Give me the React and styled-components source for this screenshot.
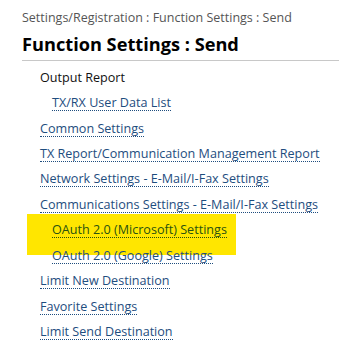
import React from 'react';
import styled, { createGlobalStyle } from 'styled-components';

const GlobalStyle = createGlobalStyle`
  body {
    margin: 0;
    background: #fff;
    font-family: "Open Sans", "Liberation Sans", sans-serif;
  }
`;

const Page = styled.div`
  width: 339px;
  height: 347px;
  overflow: hidden;
  padding: 8px 0 0 22px;
  box-sizing: border-box;
`;

const Breadcrumb = styled.div`
  font-size: 12.5px;
  line-height: 20px;
  color: #555;
`;

const Title = styled.h1`
  margin: 4px 0 0;
  font-size: 18.2px;
  font-weight: bold;
  line-height: 25px;
  color: #000;
  padding-bottom: 3px;
  border-bottom: 1px solid #c8c8c8;
`;

const List = styled.div`
  display: flex;
  flex-direction: column;
  padding-top: 4px;
`;

const Row = styled.div`
  position: relative;
  height: 25.45px;
  display: flex;
  align-items: center;
  padding-left: ${({ $indent }) => ($indent ? 30 : 18)}px;

  ${({ $mark }) =>
    $mark
      ? `&::before {
          content: '';
          position: absolute;
          left: 5px;
          top: -4px;
          width: 209px;
          height: 41px;
          background: #ffe600;
        }`
      : ''}
`;

const Label = styled.span`
  font-size: 12.6px;
  color: #111;
`;

const Link = styled.a`
  position: relative;
  font-size: 12.6px;
  color: ${({ $mark }) => ($mark ? '#2a5210' : '#1e4d7e')};
  text-decoration: none;
  border-bottom: 1px dotted ${({ $mark }) => ($mark ? '#2a5210' : '#1e4d7e')};
  line-height: 15px;
`;

const items = [
  { text: 'TX/RX User Data List', indent: true },
  { text: 'Common Settings' },
  { text: 'TX Report/Communication Management Report' },
  { text: 'Network Settings - E-Mail/I-Fax Settings' },
  { text: 'Communications Settings - E-Mail/I-Fax Settings' },
  { text: 'OAuth 2.0 (Microsoft) Settings', indent: true, mark: true },
  { text: 'OAuth 2.0 (Google) Settings', indent: true },
  { text: 'Limit New Destination' },
  { text: 'Favorite Settings' },
  { text: 'Limit Send Destination' },
];

export default function App() {
  return (
    <>
      <GlobalStyle />
      <Page>
        <Breadcrumb>Settings/Registration : Function Settings : Send</Breadcrumb>
        <Title>Function Settings : Send</Title>
        <List>
          <Row>
            <Label>Output Report</Label>
          </Row>
          {items.map((it) => (
            <Row key={it.text} $indent={it.indent} $mark={it.mark}>
              <Link href="#" $mark={it.mark}>{it.text}</Link>
            </Row>
          ))}
        </List>
      </Page>
    </>
  );
}
